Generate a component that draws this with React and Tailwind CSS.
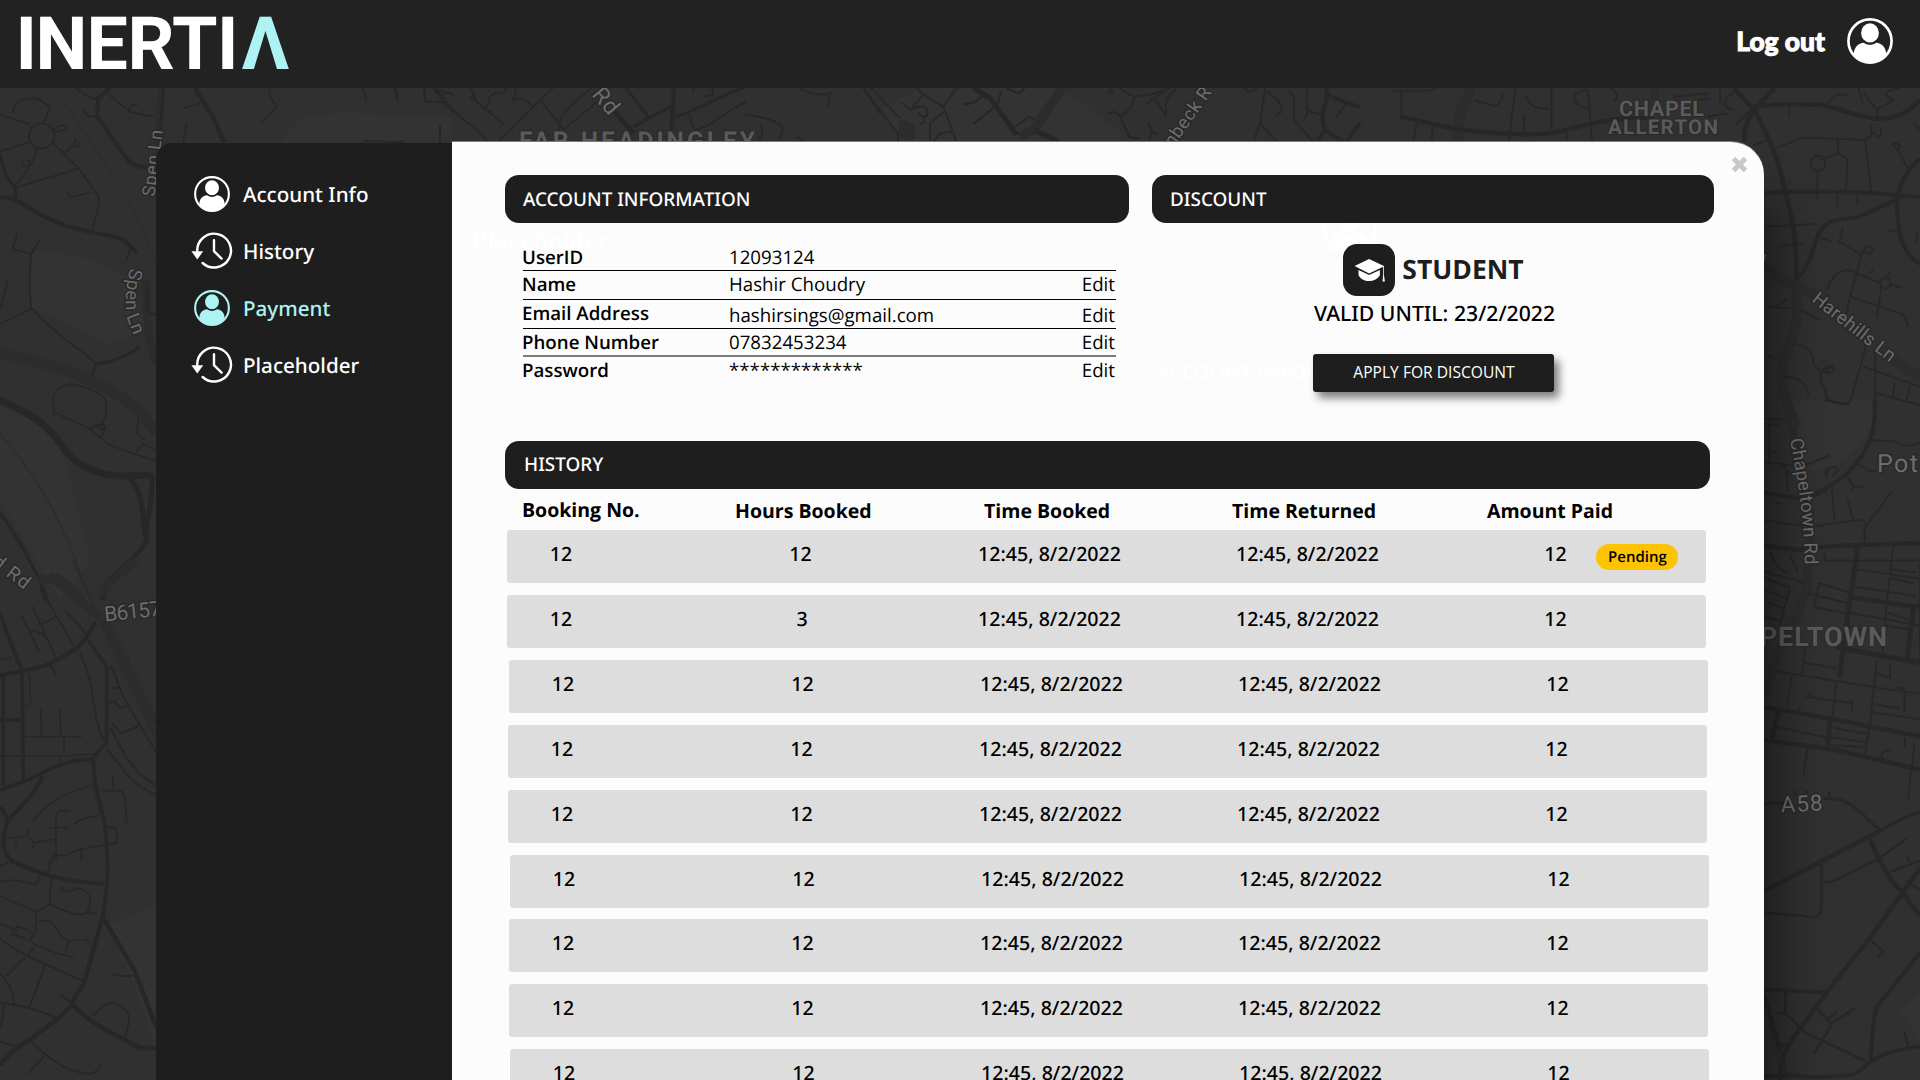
const ROAD_GROUPS = [
  {
    // north-west quarter
    transform: "translate(0 80) scale(0.33333)",
    roads: [
      ["M0 103L88 133M40 100C38 70 60 58 95 56C125 60 140 72 150 82L132 128M62 56V66M97 50V58M108 52L118 58", 1.6],
      ["M88 186L0 214M112 208C100 250 70 290 45 318M160 188L234 262L296 350C300 380 285 420 276 450M234 266L50 322M0 216L18 290L45 322", 1.8],
      ["M160 150C180 130 200 136 200 144C190 156 170 152 160 158M195 218L228 186C215 175 222 178 236 186C246 196 236 206 222 196", 1.4],
      ["M200 330L210 352L274 336M72 240C60 250 66 262 80 258C96 252 90 240 80 242", 1.4],
      ["M0 350C60 350 90 400 180 430C260 462 330 460 372 480L410 518", 4],
      ["M0 228C10 270 20 300 45 322L48 354", 3],
      ["M290 48C300 60 290 90 292 110L380 236C400 262 440 262 468 266M292 56L330 24", 4],
      ["M228 24C250 44 270 54 290 60M322 40L390 96C420 100 430 108 460 108M390 92C388 76 400 70 412 76M252 86C256 108 264 114 290 108", 1.8],
      ["M584 24L640 112L672 188", 4.5],
      ["M552 84L600 70M560 128L550 188M810 28C808 60 830 70 828 84L784 126M1088 24L1100 64M1186 24L1194 66M1320 136V188M1090 184C1120 178 1160 190 1215 184", 1.6],
      ["M1272 24L1276 66H1336L1380 110M1300 24L1340 60", 1.8],
      ["M490 24L480 150M52 460L38 508L94 522L120 480M94 522C86 580 88 640 94 686L0 732M98 686C160 760 220 790 288 850M24 600L0 690M376 546L392 504", 1.8],
      ["M288 850L276 888M288 852C340 846 400 820 418 798", 3],
      ["M440 620C444 680 430 700 468 704", 1.8],
      ["M0 960C80 1000 120 1010 180 1090C230 1170 320 1190 380 1188C440 1186 456 1180 456 1200", 7],
      ["M380 1188C440 1240 420 1300 440 1380C400 1460 310 1480 308 1560M456 1200C460 1280 430 1340 440 1380", 5],
      ["M160 950C170 920 200 910 232 914C270 930 310 940 316 960C324 1000 310 1030 300 1040M162 990V1010M160 950V996L270 1046L330 1096L405 1122L430 1092L468 1110M270 1046C290 1030 318 1030 314 1040C310 1056 290 1040 290 1040M300 1076L318 1040M416 1010L410 1060L435 1080M405 1122L468 1144", 1.6],
      ["M0 1300C50 1360 80 1430 120 1500L142 1560M124 1520L134 1560", 3],
    ],
    rivers: [
      ["M0 818C150 850 260 890 330 930C400 970 440 1020 470 1060", 11],
      ["M486 24L474 190M440 600C440 700 440 780 468 850M150 1490C190 1490 210 1530 250 1560", 8],
      ["M160 24C240 140 420 380 470 560M0 1060C100 1180 180 1290 270 1560", 1.2],
    ],
    circles: [[125, 168, 38]],
  },
  {
    // south-west quarter
    transform: "translate(0 560) scale(0.33333)",
    roads: [
      ["M0 160L40 270L66 330M0 346L70 332C150 320 170 300 220 270C260 250 270 200 290 186", 4],
      ["M10 346V676M66 332L70 660M0 480H64M0 690L80 662C160 620 220 596 276 598L320 545V320L264 240", 3.6],
      ["M0 298L36 292M88 340L92 430C90 440 80 438 72 436M122 448L125 528M180 442L182 526M74 530H246M0 588H190L280 582M192 532V580M182 590V614", 1.6],
      ["M66 168L118 276M98 140L170 300M92 212C120 210 150 240 148 250M128 192L166 170M120 84L220 254M152 316L168 346M195 150C220 180 250 200 264 236M240 280C290 380 270 460 312 540", 1.8],
      ["M280 600C280 700 310 740 318 820C322 900 330 930 308 1070M0 740L26 780C60 740 100 710 128 650M26 780C0 840 10 880 36 904C140 950 200 966 312 972", 4],
      ["M308 1070L404 1232L468 1400M308 1070L252 1270C240 1290 220 1310 216 1332M216 1332C280 1400 340 1420 420 1464H468M216 1332C180 1380 150 1390 90 1440C50 1460 20 1490 0 1516", 4.5],
      ["M98 784C130 740 180 700 280 674M222 792C250 770 280 770 300 766M168 900C170 800 160 760 180 752H208M142 808C160 800 190 800 208 808M18 836L80 828L104 848L162 838M80 828L86 808M48 840V856M102 848L98 868M160 886H200C220 870 240 868 318 854M232 856V862M244 870V904M160 886C156 900 146 920 144 940M160 912L144 904M318 802H344C354 810 352 846 348 850H320", 1.6],
      ["M300 692H362C380 700 374 740 380 788M338 648V686M338 1242L366 1248H400M278 1368C310 1330 330 1324 352 1334C400 1360 390 1380 376 1430M178 1304L216 1330", 1.8],
      ["M0 918L24 908M0 966C60 950 80 976 106 972C118 966 116 950 122 944M0 1006C40 1030 80 1040 108 1056L150 1032C150 1000 146 990 160 950M150 1032C200 1060 250 1070 262 1056C280 1020 270 990 228 984L210 996L180 990L188 980M262 1056L290 1062M108 1056V1110L90 1140L108 1156L84 1184M108 1080L154 1084C170 1110 190 1140 206 1142L256 1140L274 1154M256 1140L262 1126M206 1142L196 1178M108 1156L160 1176L222 1194", 1.6],
      ["M0 1136C50 1180 180 1230 250 1264M84 1184L20 1248M0 1240C20 1260 46 1300 40 1330M136 1214L88 1342M0 1328C60 1334 120 1350 176 1376M14 1336L0 1408M0 1446L44 1458M92 1446C160 1500 180 1530 270 1542C290 1540 300 1520 302 1508M132 1488L86 1540M0 1090L50 1112M34 1130L50 1100L92 1112M44 1124L76 1136", 2],
      ["M330 318C350 340 350 370 370 410L420 496L468 576M420 496L366 520L334 490M334 384H360M328 426L344 424L362 446L382 436M332 504C370 580 400 640 468 676M322 566C360 620 400 680 468 704", 2],
    ],
    rivers: [
      ["M110 60C150 50 170 60 200 90L300 170", 8],
      ["M308 110C310 80 340 60 410 0M310 180C380 300 390 330 420 400C440 440 450 460 470 490", 8],
      ["M220 0L290 160L470 540", 3],
    ],
    circles: [],
  },
  {
    // Far Headingley strip
    transform: "translate(380 80) scale(0.33333)",
    roads: [
      ["M44 24L52 64M130 24L138 64L186 68L290 150L330 190M160 24L186 60M170 30C200 36 210 40 222 46", 1.8],
      ["M350 190C400 140 450 90 480 60L520 24M548 150C600 110 620 90 650 66M480 60L550 146M545 190C520 100 560 90 634 24M270 50L372 132L360 138M320 100L334 90M310 90L330 66C320 50 350 30 366 44C384 30 376 24 376 24M404 24C420 50 380 70 400 60C430 46 440 66 456 76M268 24C290 40 270 44 290 60M180 136V190", 1.8],
      ["M705 96L760 160", 5],
      ["M884 24L872 150M760 140L872 80M884 110C960 90 1010 50 1090 24M738 24L806 112", 3],
      ["M940 24V34M998 24V46L968 48M924 96L944 150M944 150C1000 140 1040 90 1098 66M1088 102C1130 110 1210 120 1208 150L1200 178M1260 24C1290 44 1340 50 1356 36M1346 40V84M1140 136C1150 150 1150 166 1136 180M1246 170L1280 186M1450 24L1500 100", 2],
    ],
    rivers: [["M880 24V150", 5]],
    circles: [],
  },
  {
    // Meanwood strip
    transform: "translate(860 80) scale(0.33333)",
    roads: [
      ["M10 24L60 90L114 160V186M34 24L120 116M290 24L250 80L190 44L170 24M190 44L150 90L126 68M150 90C170 80 200 70 204 96C200 120 180 110 176 98M190 110C196 130 190 130 180 132M250 80L290 186M250 96L210 130V186M280 154L240 160L222 184", 1.8],
      ["M340 24L390 54L470 164M526 152L596 184", 5],
      ["M310 74C350 70 350 60 370 46M340 132L410 76L424 34M440 24C470 40 480 46 494 24M466 140L506 110L524 118", 2.2],
      ["M740 36C760 40 764 36 750 24M780 24C800 40 810 46 824 50C870 44 900 40 930 24M824 50C820 80 800 100 780 110L808 170L840 178M780 110C770 90 750 96 742 102M856 74L910 36M886 60L920 110M920 100C910 60 930 40 950 28M864 126C870 150 880 160 894 164M876 156L866 186", 2],
      ["M1216 24L1200 130L1180 186M1200 130L1250 186M1150 24C1170 40 1180 34 1190 24M1220 34C1270 70 1280 90 1248 108M1286 30L1302 50V120L1360 186M1340 24C1350 40 1330 60 1344 94L1330 126M1344 94L1388 104M1430 110L1460 70", 2],
      ["M1400 24V60C1390 90 1380 120 1396 150L1450 186M1400 40C1430 60 1480 76 1500 80M1500 128L1460 186M1396 150L1370 186", 4],
    ],
    rivers: [["M606 24L520 150L480 170M130 132L152 144V168L132 164Z", 9]],
    circles: [],
  },
  {
    // north-east quarter
    transform: "translate(1400 0) scale(0.33333)",
    roads: [
      ["M0 350L170 388C300 404 400 404 454 400C540 380 600 360 660 358L760 350", 4.5],
      ["M4 270V350M-20 272H70C90 272 100 270 110 264M50 370L40 424M98 378L94 424M346 266L326 424M372 346V392M454 264V388M564 270L576 424M500 394V424M312 282C300 300 300 316 284 318L222 300M378 290C390 320 410 326 446 326M564 270C540 270 520 280 524 300C530 320 550 320 560 324", 2],
      ["M636 264C650 280 660 290 640 306M820 290L930 280M840 310L930 294M960 264V310M1000 280C980 290 970 300 976 320L1000 330M920 350L980 340M1010 372L1056 326", 2],
      ["M1000 264L1064 330C1100 400 1140 480 1156 580C1180 660 1190 740 1188 800V842M1064 320C1120 310 1200 312 1260 314C1340 330 1360 350 1430 356C1500 358 1530 330 1560 300M1064 326C1090 300 1110 280 1124 264M1060 330C1040 360 1030 400 1034 424", 4.5],
      ["M1094 580C1150 570 1300 576 1410 578L1560 592M1492 600C1500 540 1530 500 1560 476M1492 596C1490 680 1500 760 1560 792", 4],
      ["M1188 842C1230 800 1240 740 1256 700C1290 640 1340 670 1400 640L1492 598", 4],
      ["M1168 314V346M1280 314C1300 290 1300 280 1340 284M1376 264L1388 310M1390 280L1432 330V356M1432 330L1480 300C1440 280 1460 270 1500 264M1060 436L1100 422M1124 446L1210 412L1396 420L1414 578M1396 420L1424 396M1414 370V410M1440 380C1450 410 1430 420 1424 400M1314 420V460C1290 470 1270 476 1264 480M1314 458L1342 478L1338 578M1254 512L1250 600M1312 584V624M1372 590V616M1484 440C1470 430 1490 420 1500 440C1496 460 1490 450 1484 440M1496 456L1524 506", 1.8],
      ["M1094 680L1250 672M1136 740L1214 730M1260 712L1296 726M1328 686L1318 726L1384 764L1372 816M1384 764C1390 740 1420 730 1418 750C1410 770 1396 760 1392 752M1460 692H1490M1540 366L1560 390M1550 700V730", 1.8],
      ["M1282 870C1300 810 1340 800 1370 820C1400 830 1410 840 1444 848M1370 820L1350 890L1340 940M1350 890L1510 944L1526 980M1444 866L1430 950M1468 852L1508 864M1460 832L1472 812M1410 820L1420 808M1350 960L1390 1000L1396 1046L1352 1200C1340 1220 1300 1210 1284 1196L1262 1140C1260 1100 1280 1100 1300 1104M1180 1030C1220 1040 1240 1050 1240 1090C1260 1120 1270 1120 1290 1112M1150 1130C1200 1130 1220 1150 1226 1188M1390 1100L1560 1160M1430 1180L1560 1216M1426 1060V1260M1484 1150L1478 1190M1530 1156L1520 1200M1094 920L1180 926M1160 896L1130 920M1094 1060L1120 1076", 2],
      ["M1200 930L1260 960", 2],
    ],
    rivers: [
      ["M214 264L180 340L172 424", 10],
      ["M1094 800C1150 850 1200 860 1250 890M1186 850C1200 940 1190 980 1160 1060C1130 1120 1150 1190 1190 1280M1480 1080L1560 1130", 10],
      ["M764 264V300", 8],
    ],
    circles: [[1254, 490, 22], [1456, 850, 16], [1290, 1108, 11]],
  },
  {
    // Chapeltown and Harehills
    transform: "translate(1700 400) scale(0.33333 0.43365)",
    roads: [
      ["M524 0C530 60 510 110 468 146C440 180 380 200 350 218M192 214L290 226L350 218", 4],
      ["M192 336L290 346L420 336L660 330M192 708L400 736L660 776M192 784L400 806L660 852M450 455L660 478", 4.5],
      ["M474 336L448 470L418 640M390 740L384 806M236 716L216 780M640 480L622 596M410 570L660 606", 5],
      ["M192 44H260M208 46V146M210 56H240M210 122L236 116M192 146H240C270 150 290 160 318 150L390 128M262 160V210M244 160C250 140 266 160 256 176M230 236L248 240M352 206L350 216M410 156C380 150 370 170 384 180M396 176L416 160M440 176L462 200L450 206M460 200H490M470 146L510 164H530M514 92C560 96 580 90 610 104C630 110 650 100 660 98M442 226L458 274M396 206L404 278M192 276C280 290 300 288 370 290M350 290L480 276C500 280 500 290 492 296M576 210L494 296V330M370 0L450 10", 2],
      ["M580 336L560 470L548 580M372 350L376 370H660M462 390L660 412M460 430L650 452M356 422L446 444M344 474L358 422M326 446L450 470M344 478L440 492M570 390L650 398M570 410L640 422M562 490L640 510M556 520L632 530M446 490L660 520M430 520L540 540M660 380V600", 2],
      ["M192 410L270 432M192 440L262 456M192 466L254 480M270 432L240 520M212 350C220 380 240 390 260 400M268 356L294 396M192 396C240 410 290 410 310 424M192 500L240 510", 2],
      ["M316 570L306 634M234 626L520 662M310 606L410 618M276 636L260 710M410 650L396 736M530 600L510 752L494 820M400 756L504 770M396 778L500 790M394 796L496 800M316 684L460 700M456 690V716M334 672L320 684M232 754L390 780M520 662L660 678M530 630L570 640V612M586 664H616M600 660L614 680V720M516 700L600 712M514 720L660 736M614 776V804M545 830C540 810 560 806 570 810M644 790L624 920M296 708V716M322 806L310 866", 2],
      ["M192 930H250M370 920C460 912 480 960 544 992C570 980 620 960 660 950M388 904V914M284 900V912M320 900V912", 3],
      ["M192 1132L540 994M510 1012C540 1070 570 1110 604 1132C630 1160 640 1170 660 1190M660 1080L510 1240L380 1366L290 1460C250 1500 240 1530 240 1568", 4.5],
      ["M364 1070V1170C360 1200 330 1194 310 1190L192 1182M370 1112C420 1112 440 1090 530 1060L622 1010M570 1088L660 1062M620 1050L628 1066M510 1244L550 1272L532 1288M620 1110L660 1130", 2.4],
      ["M192 1360L376 1366M192 1370L240 1500M192 1560C300 1550 330 1568 380 1560C440 1560 470 1560 510 1526C560 1500 600 1500 660 1490M660 1274L530 1400C516 1430 514 1500 512 1526", 4],
      ["M256 1366V1416M232 1414C270 1410 280 1440 320 1460L500 1526M352 1404L396 1440L342 1506M384 1428L412 1410M390 1440L466 1402M612 1456L624 1488M240 1490C260 1480 270 1490 250 1496", 2.6],
    ],
    rivers: [
      ["M256 0C290 100 310 200 330 300L318 440L290 500C240 560 220 620 192 680", 9],
      ["M192 1390L260 1568", 6],
    ],
    circles: [],
  },
];

const PARKS = [
  "M300 118L345 112L452 118V142H280Z",
  "M32 250L90 258L130 280L150 330L108 345L60 320L30 308Z",
  "M0 400L60 440L90 560L60 600L0 500Z",
  "M108 925L156 905V1050L140 1000Z",
  "M1780 400H1872C1876 440 1850 465 1812 472L1790 440Z",
  "M1900 1010L1920 990V1040Z",
  "M880 110L920 88H1060L1120 130V142H900Z",
];

const LABELS = [
  ["Spen Ln", 154.5, 197, -83, 18, 67],
  ["d Rd", -9, 564, 38, 19, 42],
  ["B6157", 105, 621.5, -6, 21, 57],
  ["Rd", 591, 95, 50, 23, 28],
  ["nbeck R", 1173, 148, -55, 18.5, 68],
  ["Harehills Ln", 1811, 301, 38, 18.5, 100],
  ["y", 1758, 264, 0, 18, 9],
  ["Pot", 1877, 472, 0, 25, 41],
  ["A58", 1781, 812.5, -3, 22.5, 42],
];

const CURVED_LABELS = [
  ["spen-ln", "Spen Ln", "M130 268C126 286 124 302 127 318L136 342", 69],
  ["chapeltown-rd", "Chapeltown Rd", "M1790 439C1797 480 1804 510 1805 570", 127],
];

const CAPS = [
  ["FAR HEADINGLEY", 519, 148.5, 24.5, 236],
  ["CHAPEL", 1619, 115.5, 21.5, 85],
  ["ALLERTON", 1608, 134, 20.5, 110],
  ["CHAPELTOWN", 1702, 645.5, 27, 185],
];

function MapBackdrop() {
  return (
    <svg className="absolute inset-0 h-[1080px] w-[1920px]" viewBox="0 0 1920 1080" fill="none">
      <rect width="1920" height="1080" fill="#303030" />
      {PARKS.map((d) => (
        <path key={d} d={d} fill="#333333" />
      ))}
      {ROAD_GROUPS.map((g) => (
        <g key={g.transform} transform={g.transform} strokeLinejoin="round">
          {g.rivers.map(([d, w]) => (
            <path key={d} d={d} stroke="#2c2c2c" strokeWidth={w} vectorEffect="non-scaling-stroke" />
          ))}
          {g.roads.map(([d, w]) => (
            <path key={d} d={d} stroke="#272727" strokeWidth={w} vectorEffect="non-scaling-stroke" />
          ))}
          {g.circles.map(([x, y, r]) => (
            <circle key={x} cx={x} cy={y} r={r} stroke="#272727" strokeWidth="1.8" vectorEffect="non-scaling-stroke" />
          ))}
        </g>
      ))}
      <g fill="#6c6c6c" stroke="#292929" strokeWidth="3" paintOrder="stroke" fontFamily="Roboto, sans-serif">
        {LABELS.map(([t, x, y, a, s, l]) => (
          <text key={t + x} transform={`translate(${x} ${y}) rotate(${a})`} fontSize={s} textLength={l}>
            {t}
          </text>
        ))}
        {CURVED_LABELS.map(([id, t, d, l]) => (
          <g key={id}>
            <path id={id} d={d} stroke="none" fill="none" />
            <text fontSize="18.5">
              <textPath href={`#${id}`} textLength={l}>
                {t}
              </textPath>
            </text>
          </g>
        ))}
        <g fill="#5a5a5a" fontWeight="700" strokeWidth="2">
          {CAPS.map(([t, x, y, s, l]) => (
            <text key={t} x={x} y={y} fontSize={s} textLength={l}>
              {t}
            </text>
          ))}
        </g>
      </g>
    </svg>
  );
}

function UserIcon({ className }) {
  return (
    <svg className={className} viewBox="0 0 48 48" fill="currentColor">
      <circle cx="24" cy="24" r="22.5" fill="none" stroke="currentColor" strokeWidth="2.8" />
      <ellipse cx="24" cy="15.6" rx="9.3" ry="10" />
      <path d="M7.2 39C6.6 31 11.4 26.4 17.6 25.8C21.5 28.6 26.5 28.6 30.4 25.8C36.6 26.4 41.4 31 40.8 39A22.5 22.5 0 0 1 7.2 39Z" />
    </svg>
  );
}

function HistoryIcon({ className }) {
  return (
    <svg className={className} viewBox="0 0 42 38" fill="none" stroke="currentColor" strokeWidth="2.4" strokeLinecap="round">
      <path d="M6.2 19.5A16.9 16.9 0 1 1 11.6 31" />
      <path d="M23 8.2V19.2L30.6 26.6" />
      <path d="M0.4 19.2H12.2L6.3 27.4Z" fill="currentColor" stroke="none" />
    </svg>
  );
}

function CapIcon() {
  return (
    <svg className="h-[25px] w-[31px]" viewBox="0 0 32 26" fill="#fff">
      <path d="M15.6 1L31 8.2V17.5L32 24.5H29.6L30.2 17.5V9.2L15.6 16L0.5 8.2Z" />
      <path d="M4.6 12.4L15.6 17.6L26.8 12.4V18C24.5 22 20.5 24 15.6 24C10.8 24 6.6 21.8 4.6 18Z" />
    </svg>
  );
}

const NAV = [
  ["Account Info", UserIcon, "text-white"],
  ["History", HistoryIcon, "text-white"],
  ["Payment", UserIcon, "text-[#aef3f3]"],
  ["Placeholder", HistoryIcon, "text-white"],
];

function Header() {
  return (
    <header className="relative flex h-[88px] items-center justify-between bg-[#222222]">
      <svg className="h-[88px] w-[320px]" viewBox="0 0 320 88" fontFamily="Roboto, sans-serif" fontSize="73.5" fontWeight="700">
        <text x="15.5 35.5 86.5 127.5 172 217" y="68.5" fill="#fff">
          INERTI
        </text>
        <text x="241.5" y="68.5" fill="#aef3f3" textLength="48" lengthAdjust="spacingAndGlyphs">
          Λ
        </text>
      </svg>
      <div className="flex items-center gap-[22px] pr-[27px] pb-[6px] text-white">
        <span className="font-[Lato,sans-serif] text-[26.4px] leading-[30px] font-black [-webkit-text-stroke:1px_white]">Log out</span>
        <UserIcon className="h-[46px] w-[46px]" />
      </div>
    </header>
  );
}

function Sidebar() {
  return (
    <aside className="mt-px h-[937px] w-[296px] rounded-tl-[16px] bg-[#1e1e1e] pt-[22px] pl-[35px] font-['Noto_Sans',sans-serif]">
      {NAV.map(([label, Icon, tone]) => (
        <div key={label} className={`flex h-[57px] items-center ${tone}`}>
          <div className="flex w-[52px] items-center">
            {Icon === UserIcon ? (
              <UserIcon className="ml-[3px] h-[36px] w-[36px]" />
            ) : (
              <HistoryIcon className="h-[38px] w-[42px]" />
            )}
          </div>
          <span className="pt-[2px] text-[20.6px] leading-[28px] font-medium whitespace-nowrap">{label}</span>
        </div>
      ))}
    </aside>
  );
}

function SectionBar({ title, className }) {
  return (
    <div className={`flex h-[48px] items-center rounded-[14px] bg-[#1e1e1e] font-['Noto_Sans',sans-serif] text-[18.9px] leading-[26px] font-medium text-white ${className}`}>
      {title}
    </div>
  );
}

const ACCOUNT = [
  ["UserID", "12093124", false, "h-[29px] border-b border-black", "leading-[31px]", "leading-[31px]"],
  ["Name", "Hashir Choudry", true, "h-[29px] border-b border-black", "leading-[28px]", "leading-[28px]"],
  ["Email Address", "hashirsings@gmail.com", true, "h-[29px] border-b border-black", "leading-[28px]", "leading-[31px]"],
  ["Phone Number", "07832453234", true, "h-[28px] border-b-2 border-[#7d7d7d]", "leading-[28px]", "leading-[28px]"],
  ["Password", "*************", true, "h-[28px]", "leading-[28px]", "leading-[28px]"],
];

function AccountDetails() {
  return (
    <dl className="relative mt-[19px] ml-[18px] w-[593px] text-[18.7px] text-black">
      {ACCOUNT.map(([label, value, editable, row, labelLead, valueLead]) => (
        <div key={label} className={`grid grid-cols-[206px_1fr_auto] pr-px ${row}`}>
          <dt className={`-ml-px text-[18.7px] font-semibold ${labelLead}`}>{label}</dt>
          <dd className={valueLead}>{value}</dd>
          {editable && <dd className={valueLead}>Edit</dd>}
        </div>
      ))}
    </dl>
  );
}

function Discount() {
  return (
    <div className="relative mt-[21px] flex flex-col items-center pl-px">
      <div className="flex items-center gap-[7px]">
        <div className="flex h-[52px] w-[52px] items-center justify-center rounded-[14px] bg-[#1e1e1e]">
          <CapIcon />
        </div>
        <span className="-mt-[2px] text-[26.5px] leading-[36px] font-bold text-[#1e1e1e]">STUDENT</span>
      </div>
      <p className="mt-[3px] ml-[2px] font-['Noto_Sans',sans-serif] text-[21.2px] leading-[30px] font-medium text-black">VALID UNTIL: 23/2/2022</p>
      <button className="mt-[25px] h-[38px] w-[241px] rounded-[3px] bg-[#1e1e1e] pb-[2px] pl-px text-[15.6px] leading-[22px] text-white shadow-[5px_6px_9px_rgba(0,0,0,0.5)]">
        APPLY FOR DISCOUNT
      </button>
    </div>
  );
}

const BOOKINGS = [
  ["12", true, "ml-0"],
  ["3", false, "ml-0"],
  ["12", false, "ml-[2px]"],
  ["12", false, "ml-px"],
  ["12", false, "ml-px"],
  ["12", false, "ml-[3px]"],
  ["12", false, "ml-[2px]"],
  ["12", false, "ml-[2px]"],
  ["12", false, "ml-[3px]"],
];

function BookingTable() {
  return (
    <>
      <div className="mt-[8px] ml-[17px] grid grid-cols-[213px_249px_248px_255px_1fr] text-[19.5px] leading-[28px] font-bold text-black">
        <span className="-mt-px">Booking No.</span>
        <span>Hours Booked</span>
        <span>Time Booked</span>
        <span>Time Returned</span>
        <span>Amount Paid</span>
      </div>
      <div className="mt-[5px] ml-[2px] flex flex-col gap-[11.92px] font-['Noto_Sans',sans-serif] text-[19.6px] font-medium text-black">
        {BOOKINGS.map(([hours, pending, shift], i) => (
          <div key={i} className={`flex h-[53px] w-[1199px] shrink-0 items-start rounded-[3px] bg-[#dddddd] text-center leading-[47px] ${shift}`}>
            <span className="w-[108px]">12</span>
            <span className={hours === "3" ? "ml-[106px] w-[160px] pl-[2px]" : "ml-[106px] w-[160px] pr-px"}>{hours}</span>
            <span className="ml-[88.5px] w-[160px]">12:45, 8/2/2022</span>
            <span className="ml-[98px] w-[160px]">12:45, 8/2/2022</span>
            <span className="ml-[138px] w-[60px]">12</span>
            {pending && (
              <span className="mt-[14px] ml-[10.5px] h-[26px] w-[82px] rounded-[13px] bg-[#ffc400] pl-px font-['Open_Sans',sans-serif] text-[15px] leading-[26px] font-semibold">
                Pending
              </span>
            )}
          </div>
        ))}
      </div>
    </>
  );
}

function Panel() {
  return (
    <section className="relative h-[938px] w-[1312px] rounded-tr-[33px] bg-[#fcfcfc] pt-[33px] pl-[53px] shadow-[0_-1px_0_#7a7a7a]">
      <svg className="absolute top-[15px] right-[17px] h-[15px] w-[15px]" viewBox="0 0 15 15" stroke="#c8c8c8" strokeWidth="5">
        <path d="M1.5 1.5L13.5 13.5M13.5 1.5L1.5 13.5" />
      </svg>
      <span className="absolute top-[86px] left-[21px] font-['Noto_Sans',sans-serif] text-[24px] leading-[26px] font-medium text-white">Placeholder</span>
      <span className="absolute top-[216px] left-[704px] w-[156px] overflow-hidden font-['Noto_Sans',sans-serif] text-[20px] leading-[28px] font-semibold whitespace-nowrap text-white">
        ACCOUNT INFORMATION
      </span>
      <UserIcon className="absolute top-[61px] left-[871px] h-[54px] w-[54px] text-white" />
      <div className="relative flex gap-[23px]">
        <div className="w-[624px]">
          <SectionBar title="ACCOUNT INFORMATION" className="pl-[18px]" />
          <AccountDetails />
        </div>
        <div className="w-[562px]">
          <SectionBar title="DISCOUNT" className="pl-[18px]" />
          <Discount />
        </div>
      </div>
      <div className="relative mt-[49px] w-[1205px]">
        <SectionBar title="HISTORY" className="pb-[3px] pl-[19px]" />
        <BookingTable />
      </div>
    </section>
  );
}

export default function App() {
  return (
    <div className="relative h-[1080px] w-[1920px] overflow-hidden bg-[#303030] font-['Open_Sans',sans-serif] [text-rendering:geometricPrecision]">
      <MapBackdrop />
      <Header />
      <main className="relative mt-[54px] ml-[156px] flex w-[1608px] items-start">
        <div className="absolute top-0 left-[400px] h-[1100px] w-[1208px] rounded-tr-[33px] shadow-[14px_50px_46px_rgba(0,0,0,0.45)]" />
        <Sidebar />
        <Panel />
      </main>
    </div>
  );
}
